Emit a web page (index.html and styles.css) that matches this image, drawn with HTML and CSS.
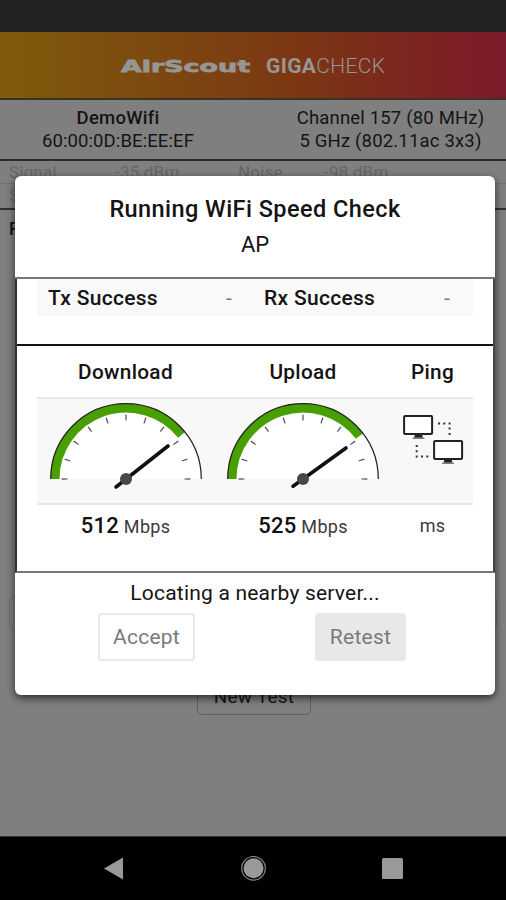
FILE: index.html
```html
<!DOCTYPE html>
<html lang="en">
<head>
<meta charset="utf-8">
<title>AirScout GigaCheck</title>
<link rel="stylesheet" href="styles.css">
</head>
<body>
<div class="screen">
  <div class="status-bar"></div>
  <header class="brand">
    <svg class="brand-logo" width="132" height="20" viewBox="0 0 132 20"><text x="1" y="16.500" textLength="129" lengthAdjust="spacingAndGlyphs">AirScout</text></svg>
    <span class="brand-name"><b>GIGA</b>CHECK</span>
  </header>
  <section class="network">
    <div class="network-col"><b>DemoWifi</b><span class="mac">60:00:0D:BE:EE:EF</span></div>
    <div class="network-col"><span class="channel">Channel 157 (80 MHz)</span><span class="band">5 GHz (802.11ac 3x3)</span></div>
  </section>
  <main class="page">
    <div class="readings"><span>Signal</span><span>-35 dBm</span><span>Noise</span><span>-98 dBm</span></div>
    <div class="readings second"><span>SNR</span></div>
    <div class="results"><b>R</b></div>
    <div class="server-box"></div>
    <div class="new-test">New Test</div>
  </main>
  <nav class="nav">
    <svg width="22" height="26" viewBox="0 0 22 26"><path d="M1 12.500L20 1.500V23.500Z" /></svg>
    <svg width="26" height="26" viewBox="0 0 26 26"><circle cx="13.500" cy="12.300" r="10"/><circle class="ring" cx="13.500" cy="12.300" r="11.800"/></svg>
    <svg width="22" height="26" viewBox="0 0 22 26"><rect x="1" y="2" width="21" height="21" rx="1.500"/></svg>
  </nav>

  <div class="dialog">
    <div class="dialog-head"><h1>Running WiFi Speed Check</h1><p>AP</p></div>
    <div class="dialog-body">
      <div class="success"><b class="tx">Tx Success</b><i>-</i><b class="rx">Rx Success</b><i>-</i></div>
      <div class="speed">
        <div class="row titles"><span>Download</span><span>Upload</span><span>Ping</span></div>
        <div class="row gauges">
          <svg width="160" height="104" viewBox="-80 -80 160 104">
            <path class="face" d="M-75 0A75 75 0 0 1 75 0Z"/>
            <path class="fill" d="M-71 0A71 71 0 0 1 55.6 -44.1"/>
            <path class="rim" d="M-75.3 0A75.3 75.3 0 0 1 75.3 0"/>
            <circle class="ticks" r="61.5" pathLength="360"/>
            <path class="needle" d="M-10 8L42 -33"/><circle class="hub" r="6"/>
          </svg>
          <svg width="160" height="104" viewBox="-80 -80 160 104">
            <path class="face" d="M-75 0A75 75 0 0 1 75 0Z"/>
            <path class="fill" d="M-71 0A71 71 0 0 1 56.5 -43"/>
            <path class="rim" d="M-75.3 0A75.3 75.3 0 0 1 75.3 0"/>
            <circle class="ticks" r="61.5" pathLength="360"/>
            <path class="needle" d="M-10 7.3L43 -31"/><circle class="hub" r="6"/>
          </svg>
          <svg class="ping" width="62" height="104" viewBox="0 0 62 104">
            <rect x="2.1" y="17.1" width="28" height="18" rx="1"/><path class="stand" d="M13 35.5h7l1 3.200h-9z"/><path class="base" d="M10.500 39.3h12"/>
            <rect x="32.1" y="42.1" width="28" height="18" rx="1"/><path class="stand" d="M42.500 60.500h7l1 3.200h-9z"/><path class="base" d="M40 64.300h12"/>
            <path class="dots" d="M36 24.500h2M41.300 24.500h2M46.600 24.500h2M46.600 29.500h2M46.600 35h2M13.700 47h2M13.700 52.300h2M13.700 57.500h2M19 57.500h2M24.300 57.500h2"/>
          </svg>
        </div>
        <div class="row values"><span><b>512</b> Mbps</span><span><b>525</b> Mbps</span><span>ms</span></div>
      </div>
    </div>
    <div class="dialog-foot">
      <p>Locating a nearby server...</p>
      <div class="actions"><button class="accept">Accept</button><button class="retest">Retest</button></div>
    </div>
  </div>
</div>
</body>
</html>
```

FILE: styles.css
```css
* { box-sizing: border-box; }
body { margin: 0; font-family: Roboto, sans-serif; color: #141414; }
b { font-weight: 500; }
.screen { position: relative; width: 506px; height: 900px; overflow: hidden; display: flex; flex-direction: column; background: #7f7f7f; }
.status-bar { height: 32px; background: #232323; flex: none; }
.brand { height: 68px; flex: none; display: flex; align-items: center; padding-left: 120px; color: #969696; background: linear-gradient(90deg, #7f5c0b 0%, #7c4810 32%, #7c3713 58%, #7c281d 78%, #7c1a2b 100%); border-bottom: 2px solid #393226; }
.brand-logo { flex: none; }
.brand-logo text { font: 700 16px "DejaVu Sans", sans-serif; fill: #969696; stroke: #969696; stroke-width: .8; }
.brand-name { font-size: 21px; margin-left: 14px; letter-spacing: .35px; font-weight: 300; white-space: nowrap; padding-top: 1px; }
.brand-name b { font-weight: 700; }
.network { height: 61px; flex: none; display: flex; border-bottom: 2px solid #2d2d2d; padding-top: 7px; font-size: 18.5px; line-height: 22.5px; }
.network-col { display: flex; flex-direction: column; align-items: center; width: 236px; }
.network-col + .network-col { width: 309px; margin-right: -39px; }
.network-col b { letter-spacing: .25px; }
.mac { letter-spacing: .1px; }
.channel, .band { letter-spacing: .18px; }
.page { flex: 1; display: flex; flex-direction: column; }
.readings { height: 23px; display: flex; padding: 0 9px; font-size: 17px; line-height: 23px; color: #666; border-bottom: 1px solid #707070; }
.readings span { flex: none; width: 106px; letter-spacing: .2px; }
.readings span:nth-child(2) { width: 123px; }
.readings span:nth-child(3) { width: 86px; }
.readings.second { height: 26px; border-bottom: 2px solid #303030; }
.results { font-size: 18px; padding: 8px 9px; height: 386px; }
.server-box { height: 34px; border: 1px solid #6c6c6c; border-radius: 5px; margin: 0 9px; }
.new-test { width: 114px; height: 40px; border: 1px solid #606060; border-radius: 5px; margin: 45px 0 0 197px; text-align: center; font-size: 19px; letter-spacing: .2px; line-height: 42px; }
.nav { height: 64px; flex: none; background: #000; display: flex; justify-content: space-between; align-items: center; padding: 0 103px; fill: #999; border-top: 1px solid #333; }
.nav .ring { fill: none; stroke: #858585; stroke-width: 1.2; }
.dialog { position: absolute; left: 15px; top: 176px; width: 480px; height: 519px; background: #fff; border-radius: 6px; box-shadow: 0 3px 8px rgba(0,0,0,.65); display: flex; flex-direction: column; }
.dialog-head { height: 103px; border-bottom: 2px solid #777; text-align: center; padding-top: 18px; }
h1 { margin: 0; font-size: 23.5px; font-weight: 500; line-height: 30px; letter-spacing: .43px; }
p { margin: 0; }
.dialog-head p { font-size: 22px; line-height: 42px; }
.dialog-body { height: 294px; border-left: 2px solid #333; border-right: 2px solid #444; border-bottom: 2px solid #777; }
.success { height: 37px; margin: 0 20px 28px; display: flex; align-items: center; background: #f9f9f9; font-size: 21px; letter-spacing: .3px; padding-left: 11px; }
.success b { flex: none; width: 178px; }
.success .rx { width: 180px; }
.success i { flex: none; font-style: normal; width: 38px; color: #777; }
.speed { border-top: 2px solid #111; padding: 0 20px; }
.row { display: grid; grid-template-columns: 177px 178px 81px; justify-items: center; align-items: center; }
.titles { height: 51px; font-size: 20.8px; font-weight: 500; letter-spacing: .3px; }
.gauges { height: 108px; background: #f8f8f8; border-top: 2px solid #e9e9e9; border-bottom: 2px solid #e6e6e6; }
.face { fill: #fff; }
.fill { fill: none; stroke: #48a000; stroke-width: 9; }
.rim { fill: none; stroke: #222; stroke-width: 1.2; }
.ticks { fill: none; stroke: #555; stroke-width: 6; stroke-dasharray: 1.2 16.8; stroke-dashoffset: .6; clip-path: polygon(0 0, 100% 0, 100% 51%, 0 51%); }
.needle { stroke: #111; stroke-width: 3.6; stroke-linecap: round; }
.hub { fill: #484848; }
.ping rect { fill: #fff; stroke: #222; stroke-width: 2; }
.ping .stand { fill: #222; }
.base { stroke: #777; stroke-width: 1.3; }
.dots { stroke: #333; stroke-width: 2; }
.values { height: 41px; font-size: 18px; color: #3a3a3a; letter-spacing: .3px; }
.values b { font-size: 22px; color: #111; }
.dialog-foot { text-align: center; }
.dialog-foot p { font-size: 21px; line-height: 40px; letter-spacing: .2px; }
.actions { display: flex; padding-left: 83px; gap: 120px; }
button { height: 48px; font: 21px Roboto, sans-serif; letter-spacing: .25px; border-radius: 4px; padding: 0; color: #7a7a7a; }
.accept { width: 97px; background: #fff; border: 2px solid #e9e9e9; }
.retest { width: 91px; background: #e8e8e8; border: 0; }
```
